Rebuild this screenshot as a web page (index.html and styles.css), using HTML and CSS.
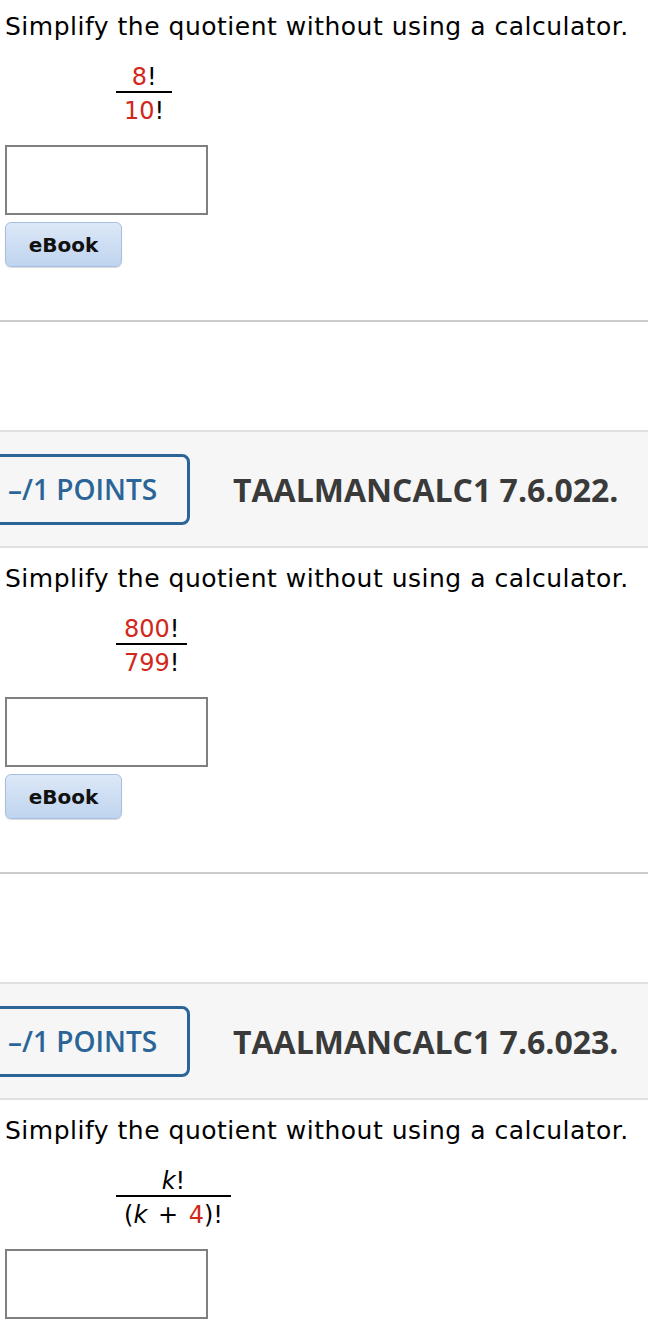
FILE: index.html
```html
<!DOCTYPE html>
<html>
<head>
    <link rel="stylesheet" href="styles.css">
</head>
<body>
    <div class="question first">
        <p class="prompt">Simplify the quotient without using a calculator.</p>
        <div class="frac">
            <span class="num"><span class="red">8</span>!</span>
            <span class="den"><span class="red">10</span>!</span>
        </div>
        <input class="answer" type="text">
        <button class="ebook">eBook</button>
    </div>
    <hr class="divider">

    <div class="qhead">
        <div class="points">&ndash;/1 POINTS</div>
        <div class="qnum">TAALMANCALC1 7.6.022.</div>
    </div>
    <div class="question">
        <p class="prompt">Simplify the quotient without using a calculator.</p>
        <div class="frac">
            <span class="num"><span class="red">800</span>!</span>
            <span class="den"><span class="red">799</span>!</span>
        </div>
        <input class="answer" type="text">
        <button class="ebook">eBook</button>
    </div>
    <hr class="divider">

    <div class="qhead">
        <div class="points">&ndash;/1 POINTS</div>
        <div class="qnum">TAALMANCALC1 7.6.023.</div>
    </div>
    <div class="question">
        <p class="prompt">Simplify the quotient without using a calculator.</p>
        <div class="frac">
            <span class="num"><i>k</i>!</span>
            <span class="den wide">(<i>k</i> + <span class="red">4</span>)!</span>
        </div>
        <input class="answer" type="text">
    </div>
</body>
</html>
```

FILE: styles.css
```css
body {
    margin: 0;
    padding: 0;
    background: #fff;
    color: #000;
    font-family: "DejaVu Sans", Verdana, sans-serif;
}

.question {
    padding: 16px 0 0 5px;
}

.question.first {
    padding-top: 12px;
}

.prompt {
    margin: 0;
    font-size: 25px;
    line-height: 30px;
    letter-spacing: 0.5px;
}

.frac {
    display: flex;
    flex-direction: column;
    width: max-content;
    margin: 21px 0 0 111px;
    text-align: center;
    font-size: 24px;
    line-height: 28px;
}

.num {
    padding: 0 8px;
}

.den {
    border-top: 2px solid #000;
    padding: 4px 8px 0;
}

.den.wide {
    word-spacing: 3px;
}

.red {
    color: #d1281c;
}

.answer {
    display: block;
    box-sizing: border-box;
    width: 203px;
    height: 70px;
    margin: 20px 0 0 0;
    border: 2px solid #808080;
    background: #fff;
    outline: none;
}

.ebook {
    display: block;
    box-sizing: border-box;
    width: 117px;
    height: 45px;
    margin-top: 7px;
    padding: 0;
    border: 1px solid #a7bfdf;
    border-radius: 6px;
    background: linear-gradient(#dce8f7, #bfd4ef);
    box-shadow: 0 1px 1px rgba(0, 0, 0, 0.15);
    color: #111;
    font-family: "DejaVu Sans", sans-serif;
    font-weight: bold;
    font-size: 20px;
    cursor: pointer;
}

.divider {
    margin: 53px 0 0 0;
    height: 0;
    border: none;
    border-top: 2px solid #cccccc;
}

.qhead {
    display: flex;
    align-items: center;
    height: 114px;
    margin-top: 108px;
    border-top: 2px solid #e0e0e0;
    border-bottom: 2px solid #e0e0e0;
    background: #f6f6f6;
    font-family: "Open Sans", sans-serif;
}

.points {
    display: flex;
    align-items: center;
    box-sizing: border-box;
    width: 200px;
    height: 71px;
    margin-left: -10px;
    padding-left: 15px;
    border: 3px solid #2b6598;
    border-radius: 8px;
    color: #2b6598;
    font-size: 28px;
    font-weight: 600;
}

.qnum {
    margin-left: 43px;
    color: #3a3a3a;
    font-size: 32px;
    font-weight: bold;
}
```
